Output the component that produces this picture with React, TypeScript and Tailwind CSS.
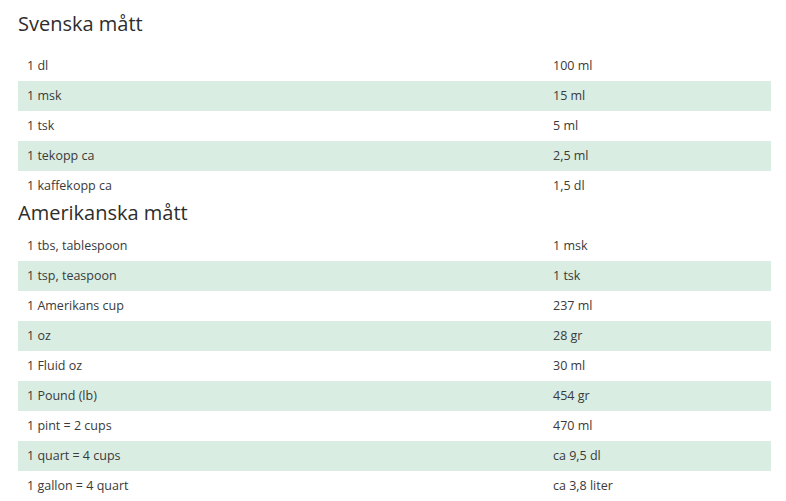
const svenska: [string, string][] = [
  ['1 dl', '100 ml'],
  ['1 msk', '15 ml'],
  ['1 tsk', '5 ml'],
  ['1 tekopp ca', '2,5 ml'],
  ['1 kaffekopp ca', '1,5 dl'],
];

const amerikanska: [string, string][] = [
  ['1 tbs, tablespoon', '1 msk'],
  ['1 tsp, teaspoon', '1 tsk'],
  ['1 Amerikans cup', '237 ml'],
  ['1 oz', '28 gr'],
  ['1 Fluid oz', '30 ml'],
  ['1 Pound (lb)', '454 gr'],
  ['1 pint = 2 cups', '470 ml'],
  ['1 quart = 4 cups', 'ca 9,5 dl'],
  ['1 gallon = 4 quart', 'ca 3,8 liter'],
];

function MeasureTable({ rows }: { rows: [string, string][] }) {
  return (
    <div className="flex flex-col">
      {rows.map(([from, to], i) => (
        <div
          key={from}
          className={`flex h-[30px] items-center text-[12.5px] text-[#3a3a3a] ${i % 2 === 1 ? 'bg-[#d9ede3]' : 'bg-white'}`}
        >
          <div className="w-[535px] pl-[9px]">{from}</div>
          <div className="flex-1">{to}</div>
        </div>
      ))}
    </div>
  );
}

export default function App() {
  return (
    <div className="h-[501px] w-[786px] overflow-hidden bg-white px-[18px] font-['Open_Sans',sans-serif]">
      <div className="w-[753px]">
        <h2 className="mt-[11px] mb-[14px] h-[26px] text-[20px] leading-[26px] text-[#2d2d2d]">Svenska mått</h2>
        <MeasureTable rows={svenska} />
        <h2 className="mb-[4px] h-[26px] text-[20px] leading-[23px] text-[#2d2d2d]">Amerikanska mått</h2>
        <MeasureTable rows={amerikanska} />
      </div>
    </div>
  );
}
